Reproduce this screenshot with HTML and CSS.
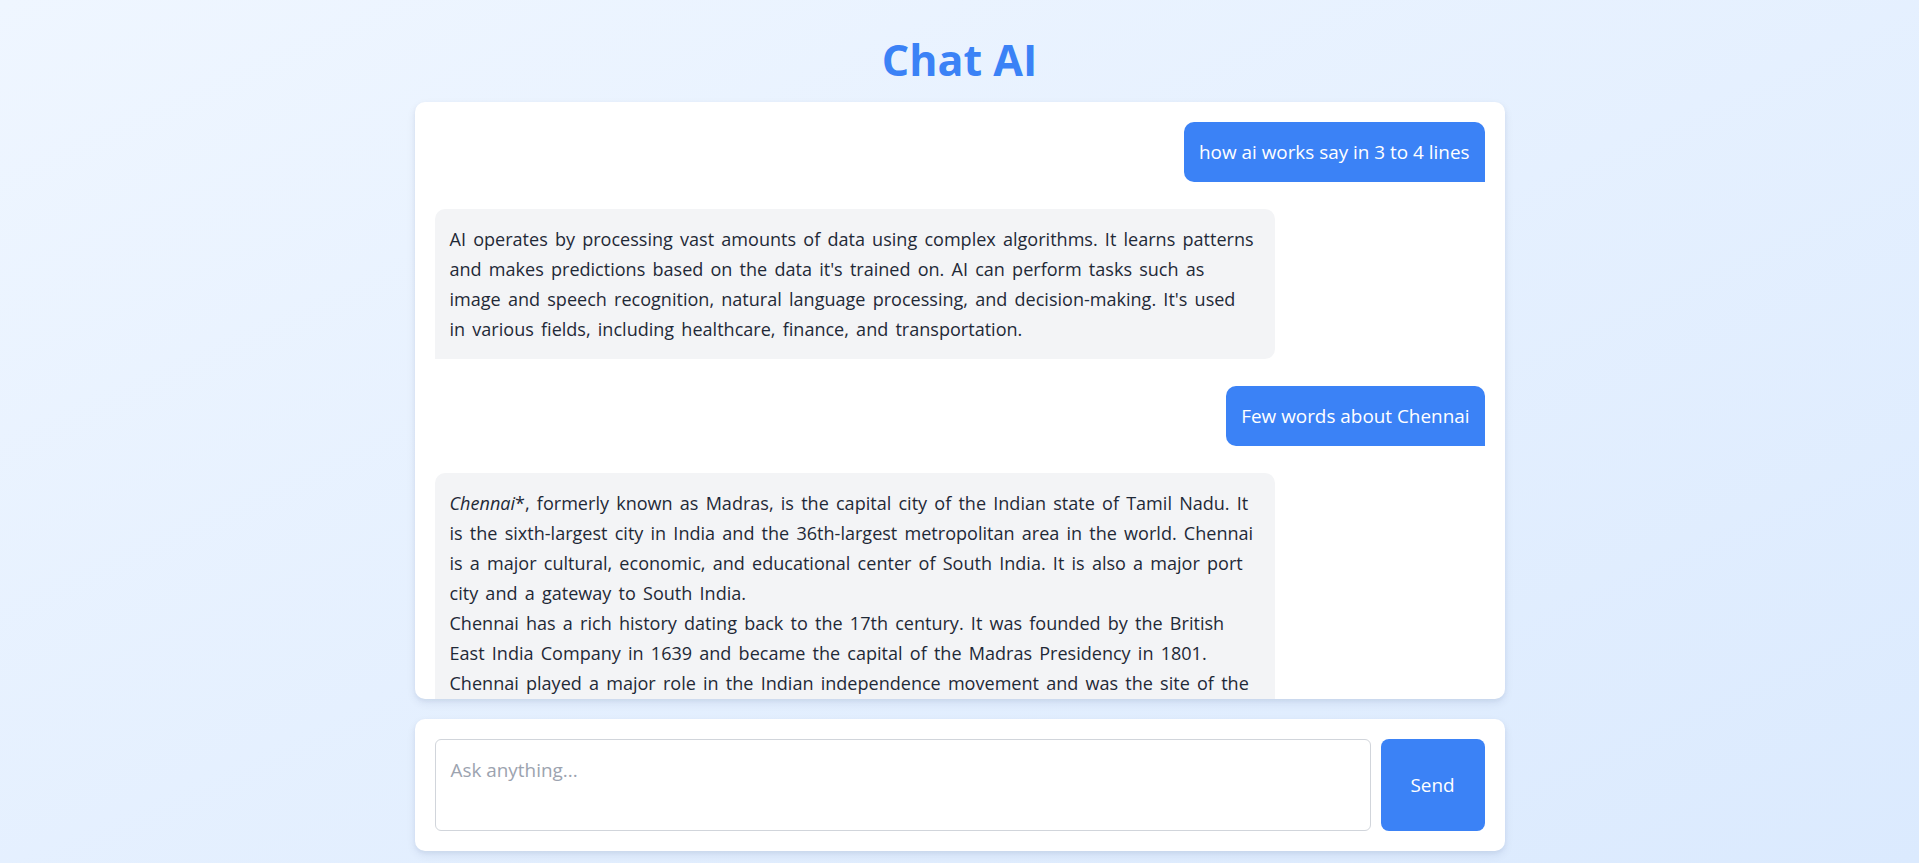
FILE: index.html
```html
<!DOCTYPE html>
<html lang="en">
<head>
<meta charset="utf-8">
<title>Chat AI</title>
<link rel="stylesheet" href="styles.css">
</head>
<body>
<div class="page">
  <h1 class="title">Chat AI</h1>
  <div class="chat-card">
    <div class="messages">
      <div class="row row-user"><div class="bubble bubble-user">how ai works say in 3 to 4 lines</div></div>
      <div class="row row-ai"><div class="bubble bubble-ai">AI operates by processing vast amounts of data using complex algorithms. It learns patterns and makes predictions based on the data it's trained on. AI can perform tasks such as image and speech recognition, natural language processing, and decision-making. It's used<br>in various fields, including healthcare, finance, and transportation.</div></div>
      <div class="row row-user"><div class="bubble bubble-user">Few words about Chennai</div></div>
      <div class="row row-ai"><div class="bubble bubble-ai"><em>Chennai</em>*, formerly known as Madras, is the capital city of the Indian state of Tamil Nadu. It is the sixth-largest city in India and the 36th-largest metropolitan area in the world. Chennai is a major cultural, economic, and educational center of South India. It is also a major port city and a gateway to South India.<br>Chennai has a rich history dating back to the 17th century. It was founded by the British East India Company in 1639 and became the capital of the Madras Presidency in 1801. Chennai played a major role in the Indian independence movement and was the site of the first session of the Indian National Congress in 1885.<br>Today, Chennai is known for its beaches, temples, classical music and dance, and its thriving automobile, software and healthcare industries.</div></div>
    </div>
  </div>
  <div class="input-card">
    <textarea class="input" placeholder="Ask anything..."></textarea>
    <button class="send">Send</button>
  </div>
</div>
</body>
</html>
```

FILE: styles.css
```css
html, body {
  margin: 0;
  padding: 0;
  height: 100%;
}
body {
  background: linear-gradient(to bottom right, #eff6ff, #dbeafe);
  font-family: "Open Sans", "Noto Sans", sans-serif;
  color: #1f2937;
  overflow: hidden;
}
.page {
  height: 100vh;
  box-sizing: border-box;
  padding: 35px 0 12px;
  display: flex;
  flex-direction: column;
  align-items: center;
}
.title {
  margin: 0 0 17px;
  font-size: 43px;
  line-height: 50px;
  font-weight: 700;
  color: #3b82f6;
}
.chat-card {
  width: 1090px;
  flex: 1;
  min-height: 0;
  background: #ffffff;
  border-radius: 10px;
  box-shadow: 0 4px 10px rgba(15, 40, 90, 0.08), 0 2px 4px rgba(15, 40, 90, 0.05);
  overflow: hidden;
  display: flex;
}
.messages {
  flex: 1;
  overflow-y: auto;
  scrollbar-width: none;
  padding: 20px;
  display: flex;
  flex-direction: column;
  gap: 27px;
}
.row {
  display: flex;
}
.row-user {
  justify-content: flex-end;
}
.row-ai {
  justify-content: flex-start;
}
.bubble {
  max-width: 80%;
  box-sizing: border-box;
  padding: 15px;
  font-size: 18.9px;
  line-height: 30px;
  border-radius: 10px;
}
.bubble-user {
  background: #3b82f6;
  color: #ffffff;
  border-bottom-right-radius: 0;
}
.bubble-ai {
  font-size: 18.06px;
  word-spacing: 2.5px;
  background: #f3f4f6;
  color: #1f2937;
  border-bottom-left-radius: 0;
}
.input-card {
  margin-top: 20px;
  width: 1090px;
  box-sizing: border-box;
  padding: 20px;
  background: #ffffff;
  border-radius: 10px;
  box-shadow: 0 4px 10px rgba(15, 40, 90, 0.08), 0 2px 4px rgba(15, 40, 90, 0.05);
  display: flex;
  gap: 10px;
}
.input {
  flex: 1;
  height: 92px;
  box-sizing: border-box;
  margin: 0;
  padding: 15px 15px;
  border: 1px solid #d1d5db;
  border-radius: 6px;
  font-family: "Open Sans", "Noto Sans", sans-serif;
  font-size: 18.9px;
  line-height: 30px;
  color: #1f2937;
  resize: none;
  outline: none;
}
.input::placeholder {
  color: #9ca3af;
}
.send {
  width: 104px;
  height: 92px;
  border: none;
  border-radius: 8px;
  background: #3b82f6;
  color: #ffffff;
  font-family: "Open Sans", "Noto Sans", sans-serif;
  font-size: 18.9px;
  cursor: pointer;
}
```
